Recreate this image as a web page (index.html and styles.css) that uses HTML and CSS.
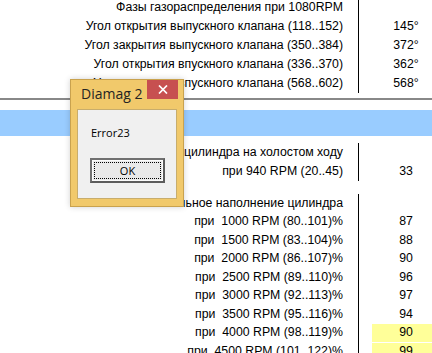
FILE: index.html
```html
<!DOCTYPE html>
<html lang="ru">
<head>
<meta charset="utf-8">
<title>Diamag 2</title>
<link rel="stylesheet" href="styles.css">
</head>
<body>
<div class="page">
  <div class="sec sec-a">
    <div class="row"><div class="lbl">Фазы газораспределения при 1080RPM</div><div class="val"></div></div>
    <div class="row"><div class="lbl">Угол открытия выпускного клапана (118..152)</div><div class="val"><span class="cell">145°</span></div></div>
    <div class="row"><div class="lbl">Угол закрытия выпускного клапана (350..384)</div><div class="val"><span class="cell">372°</span></div></div>
    <div class="row"><div class="lbl">Угол открытия впускного клапана (336..370)</div><div class="val"><span class="cell">362°</span></div></div>
    <div class="row"><div class="lbl">Угол закрытия впускного клапана (568..602)</div><div class="val"><span class="cell">568°</span></div></div>
  </div>
  <div class="rule"></div>
  <div class="band"></div>
  <div class="sec sec-b">
    <div class="row"><div class="lbl">Наполнение цилиндра на холостом ходу</div><div class="val"></div></div>
    <div class="row"><div class="lbl">при 940 RPM (20..45)</div><div class="val"><span class="cell">33</span></div></div>
  </div>
  <div class="sec sec-c">
    <div class="row"><div class="lbl">Относительное наполнение цилиндра</div><div class="val"></div></div>
    <div class="row"><div class="lbl">при&nbsp; 1000 RPM (80..101)%</div><div class="val"><span class="cell">87</span></div></div>
    <div class="row"><div class="lbl">при&nbsp; 1500 RPM (83..104)%</div><div class="val"><span class="cell">88</span></div></div>
    <div class="row"><div class="lbl">при&nbsp; 2000 RPM (86..107)%</div><div class="val"><span class="cell">90</span></div></div>
    <div class="row"><div class="lbl">при&nbsp; 2500 RPM (89..110)%</div><div class="val"><span class="cell">96</span></div></div>
    <div class="row"><div class="lbl">при&nbsp; 3000 RPM (92..113)%</div><div class="val"><span class="cell">97</span></div></div>
    <div class="row"><div class="lbl">при&nbsp; 3500 RPM (95..116)%</div><div class="val"><span class="cell">94</span></div></div>
    <div class="row"><div class="lbl">при&nbsp; 4000 RPM (98..119)%</div><div class="val"><span class="cell hl">90</span></div></div>
    <div class="row"><div class="lbl">при&nbsp; 4500 RPM (101..122)%</div><div class="val"><span class="cell hl">99</span></div></div>
    <div class="row"><div class="lbl">при&nbsp; 5000 RPM (104..125)%</div><div class="val"><span class="cell hl">99</span></div></div>
  </div>
</div>

<div class="dlg" role="dialog" aria-label="Diamag 2">
  <div class="dlg-title">
    <span class="dlg-name">Diamag 2</span>
    <span class="dlg-close"><svg width="10" height="9" viewBox="0 0 10 9"><path d="M1 0.5 L9 8.5 M9 0.5 L1 8.5" stroke="#fff" stroke-width="1.7" fill="none"/></svg></span>
  </div>
  <div class="dlg-client">
    <div class="dlg-msg">Error23</div>
    <button class="dlg-btn" type="button">OK</button>
  </div>
</div>
</body>
</html>
```
FILE: styles.css
```css
html {
  overflow: hidden;
}
body {
  margin: 0;
  background: #fff;
  color: #000;
  font-family: "Liberation Sans", Arial, sans-serif;
  font-size: 12.3px;
  position: relative;
}
.page {
  width: 470px;
}
.row {
  display: grid;
  grid-template-columns: 358px 1fr;
  height: 19px;
  line-height: 19px;
}
.lbl {
  text-align: right;
  padding-right: 15px;
  white-space: nowrap;
}
.val {
  border-left: 1px solid #000;
  padding-left: 13px;
}
.cell {
  display: block;
  width: 68px;
  text-align: center;
}
.sec-a {
  margin-top: -2px;
}
.rule {
  height: 2px;
  background: #888;
  margin-top: 5px;
}
.band {
  height: 26px;
  background: #99ccff;
  margin-top: 10px;
}
.sec-b {
  margin-top: 7px;
}
.sec-c {
  margin-top: 12.5px;
}
.sec-c .row {
  height: 18.5px;
  line-height: 18.5px;
}
.cell.hl {
  background: #ffff99;
  margin-top: 1px;
  height: 17.5px;
  line-height: 16.5px;
}

/* dialog */
.dlg {
  position: absolute;
  left: 70px;
  top: 79px;
  width: 114px;
  height: 128px;
  box-sizing: border-box;
  background: #f1c96b;
  border: 1px solid #c9a24e;
  box-shadow: 0 0 6px rgba(0, 0, 0, 0.18);
  display: flex;
  flex-direction: column;
  font-family: "Open Sans", "Noto Sans", sans-serif;
}
.dlg-title {
  height: 29px;
  display: flex;
  align-items: flex-start;
}
.dlg-name {
  font-size: 14px;
  line-height: 20px;
  color: #242424;
  padding-left: 10px;
  margin-top: 4px;
  white-space: nowrap;
}
.dlg-close {
  margin-left: auto;
  margin-right: 5px;
  flex: none;
  width: 31px;
  height: 19px;
  background: #c75050;
  display: flex;
  align-items: center;
  justify-content: center;
}
.dlg-close svg {
  display: block;
}
.dlg-client {
  margin: 0 6px;
  height: 90px;
  box-sizing: border-box;
  background: #f0f0f0;
  border: 1px solid #c8ad6c;
  padding: 15px 0 0 12px;
  display: flex;
  flex-direction: column;
  align-items: flex-start;
}
.dlg-msg {
  font-size: 11px;
  line-height: 15px;
  color: #000;
  padding-left: 1px;
}
.dlg-btn {
  position: relative;
  margin-top: 18px;
  width: 75px;
  height: 25px;
  box-sizing: border-box;
  padding: 0;
  background: #e9e9e9;
  border: 2px solid #707070;
  border-right-color: #5c5c5c;
  border-bottom-color: #5c5c5c;
  box-shadow: inset 0 0 0 1px #fafafa;
  font-family: "Open Sans", "Noto Sans", sans-serif;
  font-size: 11px;
  color: #000;
  line-height: 19px;
}
.dlg-btn::after {
  content: "";
  position: absolute;
  left: 2px;
  top: 2px;
  right: 2px;
  bottom: 2px;
  border: 1px dotted #000;
}
```
